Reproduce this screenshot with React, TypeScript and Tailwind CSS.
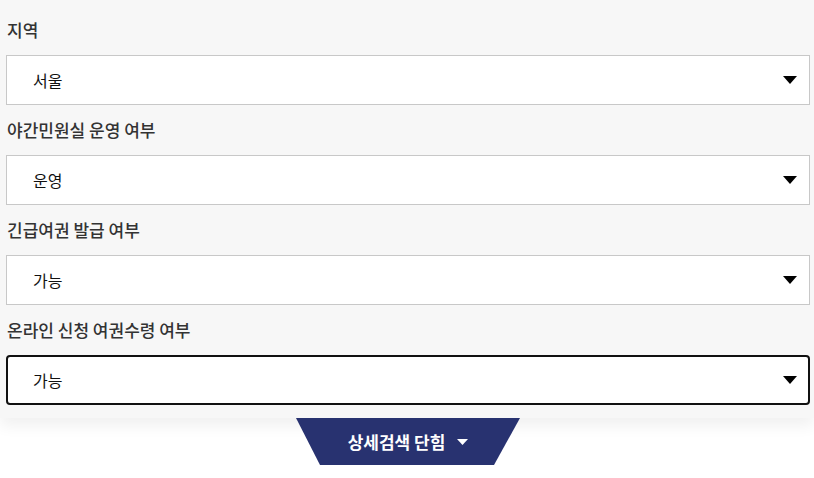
import React from "react";

const font = { fontFamily: '"Noto Sans CJK KR", "Noto Sans", sans-serif' };

function Caret({ w = 14, h = 8 }: { w?: number; h?: number }) {
  return (
    <svg width={w} height={h} viewBox={`0 0 ${w} ${h}`} className="shrink-0">
      <polygon points={`0,0 ${w},0 ${w / 2},${h}`} fill="currentColor" />
    </svg>
  );
}

function Field({ label, value, focused }: { label: string; value: string; focused?: boolean }) {
  return (
    <div className="flex flex-col">
      <div className="h-[50px] flex items-center pl-px text-[17px] font-medium text-[#333]">
        {label}
      </div>
      <div
        className={
          focused
            ? "h-[50px] bg-white border-2 border-[#111] rounded-[4px] flex items-center justify-between pl-[25px] pr-[11px] text-[16px] text-[#111]"
            : "h-[50px] bg-white border border-[#c8c8c8] flex items-center justify-between pl-[26px] pr-[12px] text-[16px] text-[#111]"
        }
      >
        <span>{value}</span>
        <span className="text-black">
          <Caret />
        </span>
      </div>
    </div>
  );
}

export default function App() {
  return (
    <div className="w-[814px] h-[478px] bg-white overflow-hidden" style={font}>
      <div className="bg-[#f7f7f7] pl-[6px] pr-[4px] pt-[5px] pb-[13px] shadow-[0_8px_14px_rgba(0,0,0,0.06)] relative z-0">
        <Field label="지역" value="서울" />
        <Field label="야간민원실 운영 여부" value="운영" />
        <Field label="긴급여권 발급 여부" value="가능" />
        <Field label="온라인 신청 여권수령 여부" value="가능" focused />
      </div>
      <div className="relative z-10 flex justify-center">
        <button className="w-[224px] h-[47px] ml-[2px] bg-[#283270] text-white flex items-center justify-center gap-[12px] text-[17px] font-bold [clip-path:polygon(0_0,224px_0,198px_100%,24px_100%)]">
          <span>상세검색 단힘</span>
          <span className="pt-[1px]">
            <Caret w={11} h={6} />
          </span>
        </button>
      </div>
    </div>
  );
}
